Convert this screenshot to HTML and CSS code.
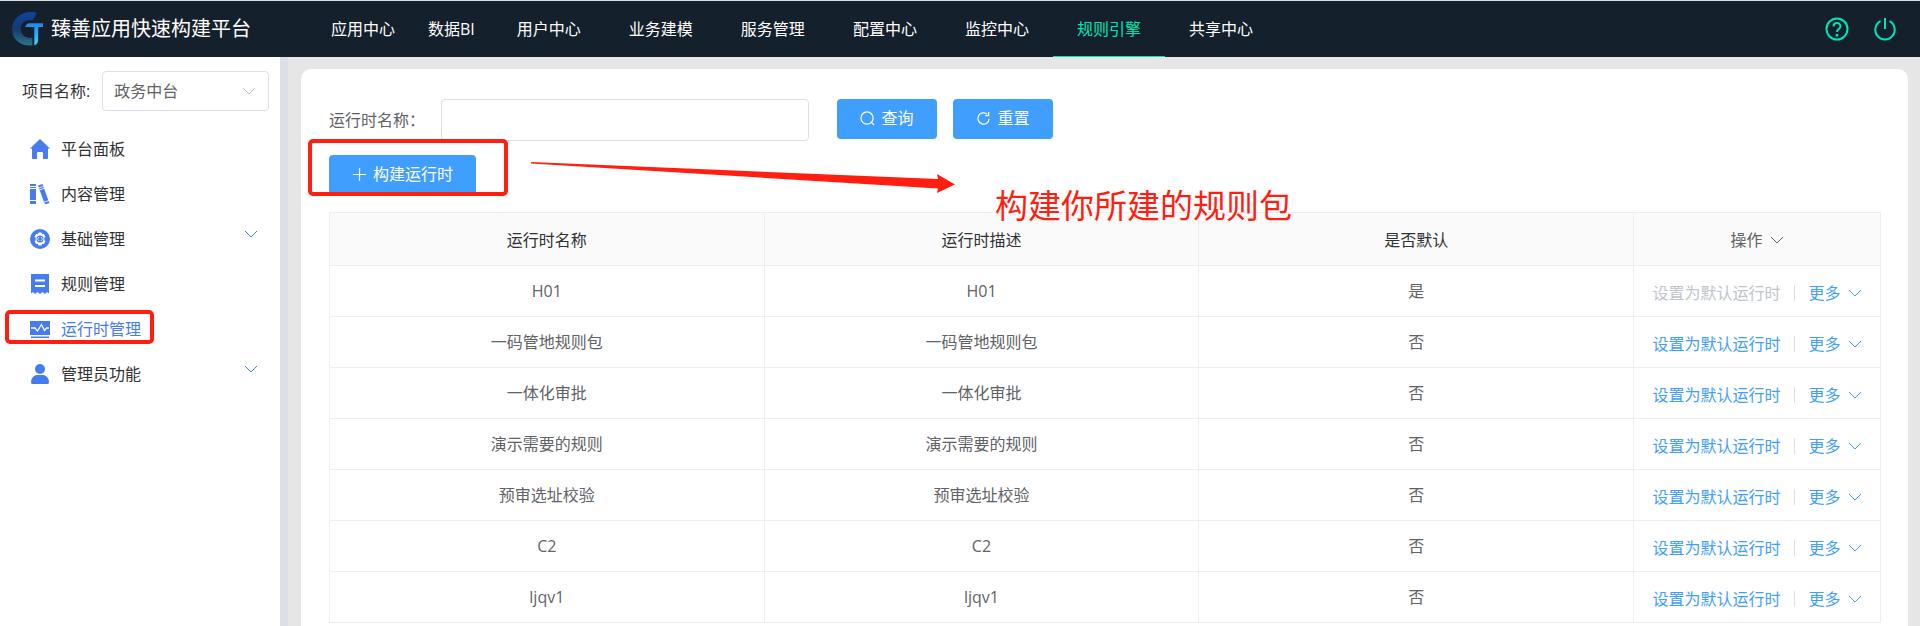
FILE: index.html
```html
<!DOCTYPE html>
<html lang="zh-CN">
<head>
<meta charset="utf-8">
<meta name="viewport" content="width=device-width, initial-scale=1">
<title>臻善应用快速构建平台</title>
<link rel="stylesheet" href="styles.css">
</head>
<body>
<svg class="sprite" aria-hidden="true">
  <symbol id="chevron" viewBox="0 0 14 8"><path d="M1 1l6 6 6-6" fill="none" stroke="currentColor"/></symbol>
</svg>

<header class="topbar">
  <div class="brand">
    <svg class="logo" viewBox="0 0 34 36" aria-hidden="true">
      <defs>
        <linearGradient id="ring" x1="0" y1="0" x2="0" y2="1"><stop offset="0" stop-color="#0c459c"/><stop offset=".5" stop-color="#143a70"/><stop offset="1" stop-color="#2a7484"/></linearGradient>
        <linearGradient id="tee" x1="0" y1="0" x2="0" y2="1"><stop offset="0" stop-color="#1c86f4"/><stop offset="1" stop-color="#3fd6fb"/></linearGradient>
      </defs>
      <path d="M25 1C11-2 0 7 0 18s9 18 21 17v-8c-7 1-12-3-12-9 0-6 5-10 11-9 2 0 4-3 5-8z" fill="url(#ring)"/>
      <path d="M14 15q1-3 4-3h14v4h-5v13q0 4-4 6V16h-9z" fill="url(#tee)"/>
    </svg>
    <h1 class="brand-name">臻善应用快速构建平台</h1>
  </div>
  <nav class="nav">
    <a class="nav-item" href="#">应用中心</a>
    <a class="nav-item nav-compact" href="#">数据BI</a>
    <a class="nav-item" href="#">用户中心</a>
    <a class="nav-item" href="#">业务建模</a>
    <a class="nav-item" href="#">服务管理</a>
    <a class="nav-item" href="#">配置中心</a>
    <a class="nav-item" href="#">监控中心</a>
    <a class="nav-item active" href="#" aria-current="page">规则引擎</a>
    <a class="nav-item" href="#">共享中心</a>
  </nav>
  <div class="tools">
    <button class="tool" type="button" aria-label="帮助">
      <svg viewBox="0 0 24 24" fill="none" stroke="currentColor" stroke-width="2"><circle cx="12" cy="12" r="10.500"/><path d="M8.500 9.500c0-2 1.500-3.500 3.500-3.500s3.500 1.500 3.500 3.300c0 2.700-3.500 2.700-3.500 5.700"/><path d="M12 17v2.500" stroke-width="2.500"/></svg>
    </button>
    <button class="tool" type="button" aria-label="退出">
      <svg viewBox="0 0 24 24" fill="none" stroke="currentColor" stroke-width="2"><path d="M7.500 4.200a9.700 9.700 0 1 0 9 0M12 1v11"/></svg>
    </button>
  </div>
</header>

<div class="layout">
  <aside class="sidebar">
    <div class="project">
      <label for="project">项目名称:</label>
      <div class="select-wrap">
        <select id="project"><option>政务中台</option></select>
        <svg class="chevron"><use href="#chevron"/></svg>
      </div>
    </div>
    <nav class="menu">
      <a class="menu-item" href="#">
        <svg class="menu-icon" viewBox="0 0 20 20"><path d="M10 0l10 9.500h-2V19q0 1-1 1h-4v-6q0-1-1-1H8q-1 0-1 1v6H3q-1 0-1-1V9.500H0z"/></svg>
        <span>平台面板</span>
      </a>
      <a class="menu-item" href="#">
        <svg class="menu-icon" viewBox="0 0 20 20"><path d="M0 0h6v2H0zM0 3h6v1H0zM0 5h6v11H0zM0 17h6v3H0z"/><path d="M8 1.500L12.500 0l.8 2-4.600 1.500zM9 4.300l4.500-1.500.4 1.100-4.500 1.500zM9.700 6.200l4.500-1.500 4.200 11.500-4.500 1.600zM14.200 18.500l4.500-1.600.8 2-4.400 1.600z"/></svg>
        <span>内容管理</span>
      </a>
      <a class="menu-item" href="#">
        <svg class="menu-icon" viewBox="0 0 20 20"><circle cx="10" cy="10" r="10"/><path d="M8.500 3.500h3l.6 1.700 1.800-.2 1.500 2.600L14.300 9v2l1.100 1.400-1.500 2.600-1.800-.2-.6 1.700h-3l-.6-1.700-1.800.2-1.500-2.600L5.700 11V9L4.600 7.600 6.100 5l1.800.2z" fill="#fff"/><circle cx="10" cy="10" r="3.500"/><path d="M9 8l-1.500 2L9 12M11 8l1.500 2-1.500 2" fill="none" stroke="#fff" stroke-width=".8"/></svg>
        <span>基础管理</span>
        <svg class="menu-arrow"><use href="#chevron"/></svg>
      </a>
      <a class="menu-item" href="#">
        <svg class="menu-icon" viewBox="0 0 20 20"><path d="M1 0h18v19.500l-2-1.500-2 2-2.500-2-2.500 2-2.500-2L5 20l-2-2-2 1.500z"/><path d="M5 5.500h10v2H5zM5 11h10v2H5z" fill="#fff"/></svg>
        <span>规则管理</span>
      </a>
      <a class="menu-item current marked" href="#" aria-current="page">
        <svg class="menu-icon" viewBox="0 0 20 20"><path d="M0 2h20v14H0zM1 17.500h18v1.500H1z"/><path d="M1 9h4l2.500 3 4-6.500 3 6 2-2.500H19" fill="none" stroke="#fff" stroke-width="1.300"/></svg>
        <span>运行时管理</span>
      </a>
      <a class="menu-item" href="#">
        <svg class="menu-icon" viewBox="0 0 20 20"><circle cx="10" cy="5" r="5"/><path d="M1 18.500C1 13.500 4 11 8 11h4c4 0 7 2.500 7 7.500q0 1.500-1.500 1.500h-15Q1 20 1 18.500z"/></svg>
        <span>管理员功能</span>
        <svg class="menu-arrow"><use href="#chevron"/></svg>
      </a>
    </nav>
  </aside>

  <main class="content">
    <section class="panel">
      <form class="search">
        <label for="runtime">运行时名称：</label>
        <input id="runtime" type="text">
        <div class="search-actions">
          <button class="btn" type="button"><svg class="btn-icon" viewBox="0 0 16 16"><circle cx="7.500" cy="7.500" r="6.500"/><path d="M12 12l3 3"/></svg>查询</button>
          <button class="btn" type="reset"><svg class="btn-icon" viewBox="0 0 16 16"><path d="M14 8.500a6 6 0 1 1-2-5M13.500 1v4h-4"/></svg>重置</button>
        </div>
      </form>
      <div class="toolbar">
        <div class="build marked">
          <button class="btn btn-build" type="button"><svg class="btn-icon" viewBox="0 0 16 16"><path d="M8 1v14M1 8h14"/></svg>构建运行时</button>
        </div>
        <div class="note">
          <svg class="note-arrow" viewBox="0 0 424 32" aria-hidden="true"><path d="M0 0l407 17-1-5 18 10.500L406 31l1-4.500L0 1.500z"/></svg>
          <span class="note-text">构建你所建的规则包</span>
        </div>
      </div>
      <table class="grid">
        <colgroup><col><col><col><col class="col-ops"></colgroup>
        <thead>
          <tr><th>运行时名称</th><th>运行时描述</th><th>是否默认</th><th class="ops-head">操作<svg class="chevron"><use href="#chevron"/></svg></th></tr>
        </thead>
        <tbody>
          <tr><td>H01</td><td>H01</td><td>是</td><td><div class="ops"><button class="link" type="button" disabled>设置为默认运行时</button><button class="link more" type="button">更多<svg class="chevron"><use href="#chevron"/></svg></button></div></td></tr>
          <tr><td>一码管地规则包</td><td>一码管地规则包</td><td>否</td><td><div class="ops"><button class="link" type="button">设置为默认运行时</button><button class="link more" type="button">更多<svg class="chevron"><use href="#chevron"/></svg></button></div></td></tr>
          <tr><td>一体化审批</td><td>一体化审批</td><td>否</td><td><div class="ops"><button class="link" type="button">设置为默认运行时</button><button class="link more" type="button">更多<svg class="chevron"><use href="#chevron"/></svg></button></div></td></tr>
          <tr><td>演示需要的规则</td><td>演示需要的规则</td><td>否</td><td><div class="ops"><button class="link" type="button">设置为默认运行时</button><button class="link more" type="button">更多<svg class="chevron"><use href="#chevron"/></svg></button></div></td></tr>
          <tr><td>预审选址校验</td><td>预审选址校验</td><td>否</td><td><div class="ops"><button class="link" type="button">设置为默认运行时</button><button class="link more" type="button">更多<svg class="chevron"><use href="#chevron"/></svg></button></div></td></tr>
          <tr><td>C2</td><td>C2</td><td>否</td><td><div class="ops"><button class="link" type="button">设置为默认运行时</button><button class="link more" type="button">更多<svg class="chevron"><use href="#chevron"/></svg></button></div></td></tr>
          <tr><td>ljqv1</td><td>ljqv1</td><td>否</td><td><div class="ops"><button class="link" type="button">设置为默认运行时</button><button class="link more" type="button">更多<svg class="chevron"><use href="#chevron"/></svg></button></div></td></tr>
        </tbody>
      </table>
    </section>
  </main>
</div>
</body>
</html>
```
FILE: styles.css
```css
*, *::before, *::after { box-sizing: border-box; }

body {
  margin: 0;
  min-height: 100vh;
  display: flex;
  flex-direction: column;
  background: #e6e6e6;
  color: #303133;
  font: 16px/24px "Open Sans", "Noto Sans CJK SC", sans-serif;
}

button, input, select { font: inherit; color: inherit; }
button { cursor: pointer; }
a { color: inherit; text-decoration: none; }
.sprite { display: none; }
.chevron { width: 14px; height: 8px; }

/* Top bar */
.topbar {
  display: flex;
  height: 57px;
  border-top: 1px solid #dcdfe6;
  background: #15202d;
  color: #fff;
}
.brand {
  display: flex;
  align-items: center;
  gap: 6px;
  width: 307px;
  padding-left: 12px;
}
.logo { width: 33px; height: 36px; }
.brand-name { margin: 0; font-size: 20px; font-weight: 400; }
.nav { display: flex; flex: 1; }
.nav-item {
  display: flex;
  align-items: center;
  padding: 0 24px;
  border-bottom: 1px solid transparent;
  white-space: nowrap;
}
.nav-compact { padding: 0 18px 0 9px; }
.nav-item.active { color: #00e6b8; border-color: #00e6b8; }
.tools { display: flex; align-items: center; gap: 24px; padding-right: 23px; }
.tool { display: flex; padding: 0; border: 0; background: none; color: #00e6b8; }
.tool svg { width: 24px; height: 24px; }

/* Sidebar */
.layout { display: flex; flex: 1; }
.sidebar {
  width: 288px;
  padding-top: 14px;
  background: #fff;
  border-right: 8px solid #dcdfe8;
}
.project { display: flex; align-items: center; gap: 12px; padding: 0 11px 0 22px; }
.project label { white-space: nowrap; }
.select-wrap { position: relative; flex: 1; color: #606266; }
.select-wrap select {
  width: 100%;
  height: 40px;
  padding: 0 32px 0 11px;
  border: 1px solid #dcdfe6;
  border-radius: 4px;
  background: #fff;
  appearance: none;
}
.select-wrap .chevron { position: absolute; right: 13px; top: 16px; color: #c0c4cc; pointer-events: none; }
.menu { padding-top: 15px; }
.menu-item {
  position: relative;
  display: flex;
  align-items: center;
  gap: 11px;
  height: 45px;
  padding: 0 22px 0 30px;
}
.menu-icon { width: 20px; height: 20px; fill: #467cf0; }
.menu-arrow { width: 14px; height: 8px; margin: 0 0 10px auto; color: #467cf0; }
.menu-item.current { color: #467cf0; }

/* Red highlight frames */
.marked::after {
  content: "";
  position: absolute;
  border: 4px solid #ff1e10;
  border-radius: 5px;
  pointer-events: none;
}
.menu-item.marked::after { left: 5px; top: 4px; width: 149px; height: 34px; }
.build.marked::after { left: -21px; top: -16px; width: 200px; height: 57px; }

/* Content */
.content { flex: 1; min-width: 0; padding: 12px 12px 0 13px; display: flex; }
.panel {
  flex: 1;
  min-width: 0;
  padding: 30px 27px 0 28px;
  border-radius: 10px 10px 0 0;
  background: #fff;
}
.search { display: flex; align-items: center; color: #606266; }
.search label { width: 112px; white-space: nowrap; }
.search input {
  width: 368px;
  height: 42px;
  padding: 0 15px;
  border: 1px solid #dcdfe6;
  border-radius: 4px;
}
.search-actions { display: flex; align-self: flex-start; gap: 16px; margin-left: 28px; }
.btn {
  display: flex;
  align-items: center;
  justify-content: center;
  gap: 6px;
  width: 100px;
  height: 40px;
  padding: 0 0 2px;
  border: 0;
  border-radius: 4px;
  background: #409eff;
  color: #fff;
}
.btn-icon { width: 15px; height: 15px; fill: none; stroke: currentColor; stroke-width: 1.3; }
.btn-build { width: 147px; }
.toolbar { display: flex; padding: 14px 0 17px; }
.build { position: relative; }
.note { position: relative; margin-left: 55px; color: #ff1e10; }
.note-arrow { position: absolute; left: 0; top: 7px; width: 424px; height: 32px; fill: currentColor; }
.note-text {
  position: absolute;
  left: 464px;
  top: 27px;
  font-size: 33px;
  line-height: 48px;
  white-space: nowrap;
}

/* Table */
.grid {
  width: 100%;
  table-layout: fixed;
  border-collapse: collapse;
  text-align: center;
  color: #606266;
}
.col-ops { width: 247px; }
.grid th, .grid td { padding: 0; border: 1px solid #ebeef5; }
.grid th { height: 53px; padding-top: 2px; background: #fafafa; color: #303133; font-weight: 400; }
.grid th.ops-head { color: #606266; }
.ops-head .chevron { margin-left: 7px; vertical-align: 2px; }
.grid td { height: 51px; }
.ops { display: flex; align-items: center; justify-content: center; padding-top: 4px; }
.link { padding: 0; border: 0; background: none; color: #409eff; line-height: 24px; white-space: nowrap; }
.link:disabled { color: #c0c4cc; cursor: default; }
.more { display: flex; align-items: center; gap: 7px; }
.more::before { content: ""; width: 1px; height: 16px; margin: 0 7px 0 13px; background: #dcdfe6; }
```
